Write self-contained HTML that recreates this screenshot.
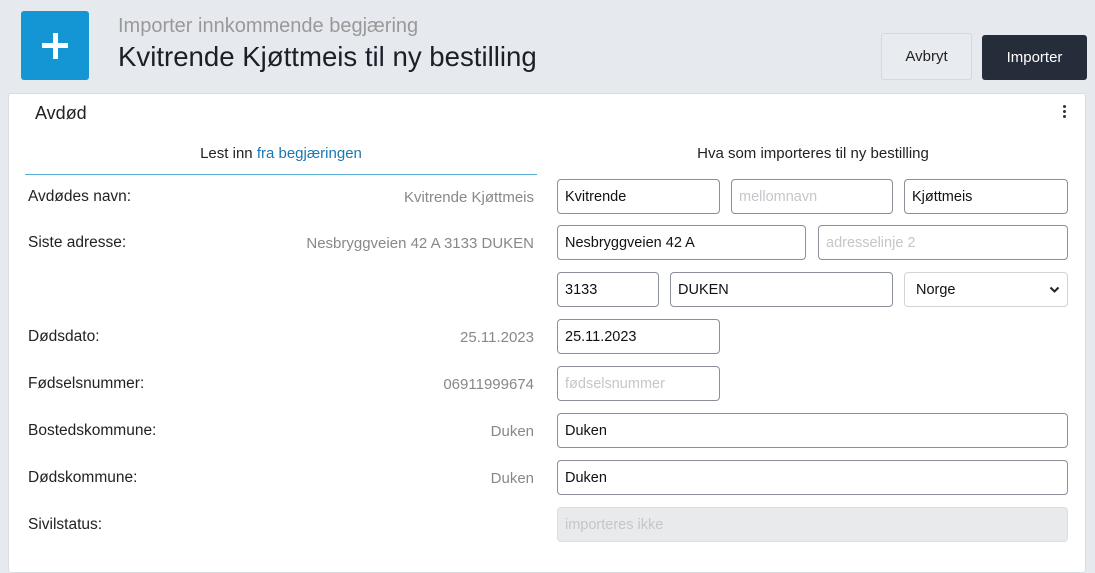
<!DOCTYPE html>
<html><head><meta charset="utf-8"><style>
*{box-sizing:border-box;margin:0;padding:0}
body{width:1095px;height:556px;overflow:hidden;background:#e6e9ee;font-family:"Liberation Sans",sans-serif;position:relative;color:#222}
.a{position:absolute}
.icon{left:21px;top:11px;width:68px;height:69px;background:#1596d4;border-radius:3px}
.icon:before{content:"";position:absolute;left:21px;top:32px;width:26px;height:5px;background:#fff}
.icon:after{content:"";position:absolute;left:31.5px;top:21.5px;width:5px;height:26px;background:#fff}
.sub{left:118px;top:15px;font-size:20px;color:#999}
.title{left:118px;top:41px;font-size:27.6px;color:#1b1f27}
.btn{border-radius:3px;font-size:15px;display:flex;align-items:center;justify-content:center}
.card{left:8px;top:93px;width:1078px;height:480px;background:#fff;border:1px solid #d8dbe0;border-radius:3px}
.lbl{left:28px;font-size:15.5px;color:#222}
.val{right:561px;font-size:15px;color:#888;text-align:right}
.in{position:absolute;height:35px;border:1px solid #8a8f98;border-radius:4px;font-size:14.5px;padding:0 7px;display:flex;align-items:center;background:#fff;color:#111}
.ph{color:#c4c6ca}
</style></head><body>
<div class="a icon"></div>
<div class="a sub">Importer innkommende begjæring</div>
<div class="a title">Kvitrende Kjøttmeis til ny bestilling</div>
<div class="a btn" style="left:881px;top:33px;width:91px;height:47px;border:1px solid #d5d8dd;background:#e8ebef;color:#222">Avbryt</div>
<div class="a btn" style="left:982px;top:35px;width:105px;height:45px;background:#252d3a;color:#fff">Importer</div>
<div class="a card"></div>
<div class="a" style="left:35px;top:103px;font-size:18px">Avdød</div>
<div class="a" style="left:1063px;top:105px;width:3px">
<div style="width:3px;height:3px;background:#333;border-radius:50%;margin-bottom:2px"></div>
<div style="width:3px;height:3px;background:#333;border-radius:50%;margin-bottom:2px"></div>
<div style="width:3px;height:3px;background:#333;border-radius:50%"></div></div>
<div class="a" style="left:25px;width:512px;top:145px;text-align:center;font-size:15px">Lest inn <span style="color:#1a78b0">fra begjæringen</span></div>
<div class="a" style="left:25px;width:512px;top:174px;height:1px;background:#5aaed6"></div>
<div class="a" style="left:557px;width:512px;top:145px;text-align:center;font-size:15px">Hva som importeres til ny bestilling</div>

<div class="a lbl" style="top:188px">Avdødes navn:</div><div class="a val" style="top:189px">Kvitrende Kjøttmeis</div>
<div class="a lbl" style="top:234px">Siste adresse:</div><div class="a val" style="top:235px">Nesbryggveien 42 A 3133 DUKEN</div>
<div class="a lbl" style="top:328px">Dødsdato:</div><div class="a val" style="top:329px">25.11.2023</div>
<div class="a lbl" style="top:375px">Fødselsnummer:</div><div class="a val" style="top:376px">06911999674</div>
<div class="a lbl" style="top:422px">Bostedskommune:</div><div class="a val" style="top:423px">Duken</div>
<div class="a lbl" style="top:469px">Dødskommune:</div><div class="a val" style="top:470px">Duken</div>
<div class="a lbl" style="top:516px">Sivilstatus:</div>

<div class="in" style="left:557px;top:179px;width:163px">Kvitrende</div>
<div class="in ph" style="left:731px;top:179px;width:162px">mellomnavn</div>
<div class="in" style="left:904px;top:179px;width:164px">Kjøttmeis</div>
<div class="in" style="left:557px;top:225px;width:249px">Nesbryggveien 42 A</div>
<div class="in ph" style="left:818px;top:225px;width:250px">adresselinje 2</div>
<div class="in" style="left:557px;top:272px;width:102px">3133</div>
<div class="in" style="left:670px;top:272px;width:223px">DUKEN</div>
<div class="in" style="left:904px;top:272px;width:164px;border-color:#d0d3d8;padding-left:11px;justify-content:space-between">Norge<svg width="11" height="8" viewBox="0 0 11 8"><path d="M1.5 1.5l4 4 4-4" stroke="#222" stroke-width="2" fill="none"/></svg></div>
<div class="in" style="left:557px;top:319px;width:163px">25.11.2023</div>
<div class="in ph" style="left:557px;top:366px;width:163px">fødselsnummer</div>
<div class="in" style="left:557px;top:413px;width:511px">Duken</div>
<div class="in" style="left:557px;top:460px;width:511px">Duken</div>
<div class="in ph" style="left:557px;top:507px;width:511px;background:#e9eaec;border-color:#dcdde0">importeres ikke</div>
</body></html>
